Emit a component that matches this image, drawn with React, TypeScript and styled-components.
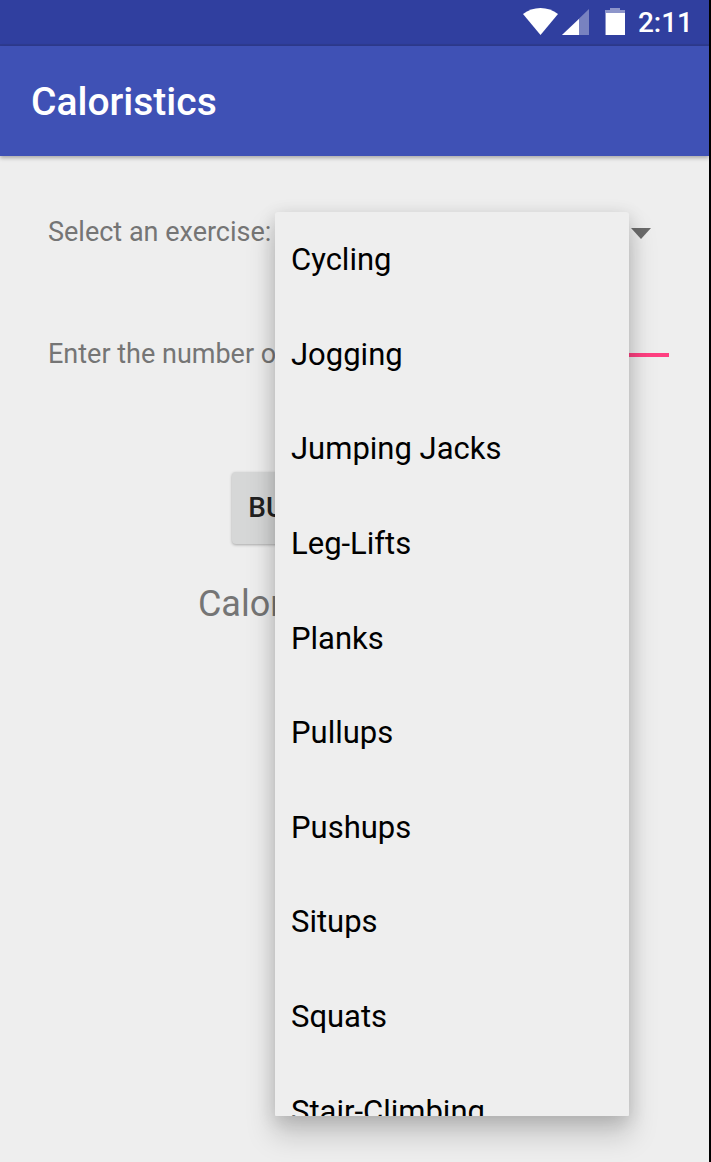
import React, { useState } from 'react';
import styled, { createGlobalStyle } from 'styled-components';

const GlobalStyle = createGlobalStyle`
  * { box-sizing: border-box; }
  body {
    margin: 0;
    background: #eee;
    font-family: Roboto, "Noto Sans", sans-serif;
  }
`;

const Screen = styled.div`
  display: flex;
  flex-direction: column;
  min-height: 100vh;
  overflow: hidden;
  border-right: 2px solid #000;
  background: #eee;
`;

const StatusBar = styled.div`
  display: flex;
  align-items: center;
  justify-content: flex-end;
  height: 46px;
  padding: 2px 16px 0 0;
  border-bottom: 2px solid #2e3b90;
  background: #303f9f;
  color: #fff;
`;

const StatusIcons = styled.svg`
  display: block;
  width: 103px;
  height: 30px;
  margin-right: 12px;
`;

const Clock = styled.time`
  font-size: 28px;
  line-height: 40px;
  font-weight: 500;
`;

const AppBar = styled.header`
  display: flex;
  align-items: center;
  height: 110px;
  padding: 2px 31px 0;
  background: #3f51b5;
  color: #fff;
  box-shadow: 0 2px 4px rgba(0, 0, 0, 0.3);
`;

const Title = styled.h1`
  margin: 0;
  font-size: 39px;
  line-height: 48px;
  font-weight: 500;
`;

const Form = styled.form`
  display: flex;
  flex-direction: column;
  padding: 56px 40px 0 48px;
`;

const Row = styled.div`
  display: flex;
  align-items: center;
  height: 40px;
  margin-bottom: 82px;
`;

const Label = styled.label`
  flex: none;
  min-width: 227px;
  color: #757575;
  font-size: 27px;
  line-height: 40px;
  white-space: nowrap;
`;

const Picker = styled.div`
  position: relative;
  display: flex;
  align-items: center;
  flex: 1;
`;

const Select = styled.select`
  flex: 1;
  min-width: 0;
  height: 40px;
  padding: 0 16px;
  appearance: none;
  border: 0;
  background: transparent;
  font: 31px/40px Roboto, sans-serif;
`;

const Caret = styled.svg`
  flex: none;
  width: 20px;
  height: 11px;
  margin-right: 18px;
  margin-top: 2px;
`;

const Menu = styled.div`
  position: absolute;
  z-index: 2;
  top: 0;
  left: 0;
  right: 40px;
  height: 904px;
  overflow: hidden;
  border-radius: 3px 3px 1px 1px;
  background: #eee;
  box-shadow: 0 4px 18px rgba(0, 0, 0, 0.15), 0 18px 28px 2px rgba(0, 0, 0, 0.17);
`;

const Options = styled.div`
  display: grid;
  grid-template-rows: repeat(10, 1fr);
  height: 946px;
`;

const Option = styled.button`
  padding: 2px 16px 0;
  border: 0;
  background: transparent;
  color: #000;
  font: 31px/40px Roboto, sans-serif;
  text-align: left;
`;

const NumberInput = styled.input`
  flex: 1;
  align-self: flex-start;
  min-width: 0;
  height: 23px;
  padding: 0;
  border: 0;
  border-bottom: 4px solid #ff4081;
  outline: 0;
  background: transparent;
  font: 16px/19px Roboto, sans-serif;
`;

const BurnButton = styled.button`
  align-self: center;
  height: 72px;
  margin-top: 16px;
  padding: 0 20px 0 16px;
  border: 0;
  border-radius: 4px;
  background: #d6d7d7;
  box-shadow: 0 1px 3px rgba(0, 0, 0, 0.3);
  color: #212121;
  font: 500 28px/40px Roboto, sans-serif;
  text-transform: uppercase;
  white-space: nowrap;
`;

const Result = styled.output`
  align-self: center;
  margin-top: 36px;
  color: #757575;
  font-size: 36px;
  line-height: 48px;
  white-space: nowrap;
`;

const exercises = [
  'Cycling',
  'Jogging',
  'Jumping Jacks',
  'Leg-Lifts',
  'Planks',
  'Pullups',
  'Pushups',
  'Situps',
  'Squats',
  'Stair-Climbing',
];

export default function App() {
  const [exercise, setExercise] = useState(exercises[0]);

  return (
    <Screen>
      <GlobalStyle />
      <StatusBar>
        <StatusIcons viewBox="0 0 103 30" aria-hidden="true">
          <path d="M0 6C5 2 11 0 17.500 0S30 2 35 6L17.500 27Z" fill="#fff" />
          <path d="M39 27 66 1V27Z" fill="#fff" fillOpacity=".35" />
          <path d="M39 27 56 11V27Z" fill="#fff" />
          <path d="M82 2H87V0H97V2H102V27H82Z" fill="#fff" fillOpacity=".45" />
          <path d="M83 5H102V27H83Z" fill="#fff" />
        </StatusIcons>
        <Clock>2:11</Clock>
      </StatusBar>
      <AppBar>
        <Title>Caloristics</Title>
      </AppBar>
      <Form onSubmit={(event) => event.preventDefault()}>
        <Row>
          <Label htmlFor="exercise">Select an exercise:</Label>
          <Picker>
            <Select
              id="exercise"
              value={exercise}
              onChange={(event) => setExercise(event.target.value)}
            >
              {exercises.map((name) => (
                <option key={name}>{name}</option>
              ))}
            </Select>
            <Caret viewBox="0 0 20 11" aria-hidden="true">
              <path d="M0 0H20L10 11Z" fill="#6b6b6b" />
            </Caret>
            <Menu>
              <Options role="listbox" aria-label="Exercise">
                {exercises.map((name) => (
                  <Option
                    key={name}
                    type="button"
                    role="option"
                    aria-selected={name === exercise}
                    onClick={() => setExercise(name)}
                  >
                    {name}
                  </Option>
                ))}
              </Options>
            </Menu>
          </Picker>
        </Row>
        <Row>
          <Label htmlFor="amount">Enter the number of reps:</Label>
          <NumberInput id="amount" inputMode="numeric" />
        </Row>
        <BurnButton type="submit">Burn Calories!</BurnButton>
        <Result htmlFor="exercise amount">Calories Burned: 0.0</Result>
      </Form>
    </Screen>
  );
}
